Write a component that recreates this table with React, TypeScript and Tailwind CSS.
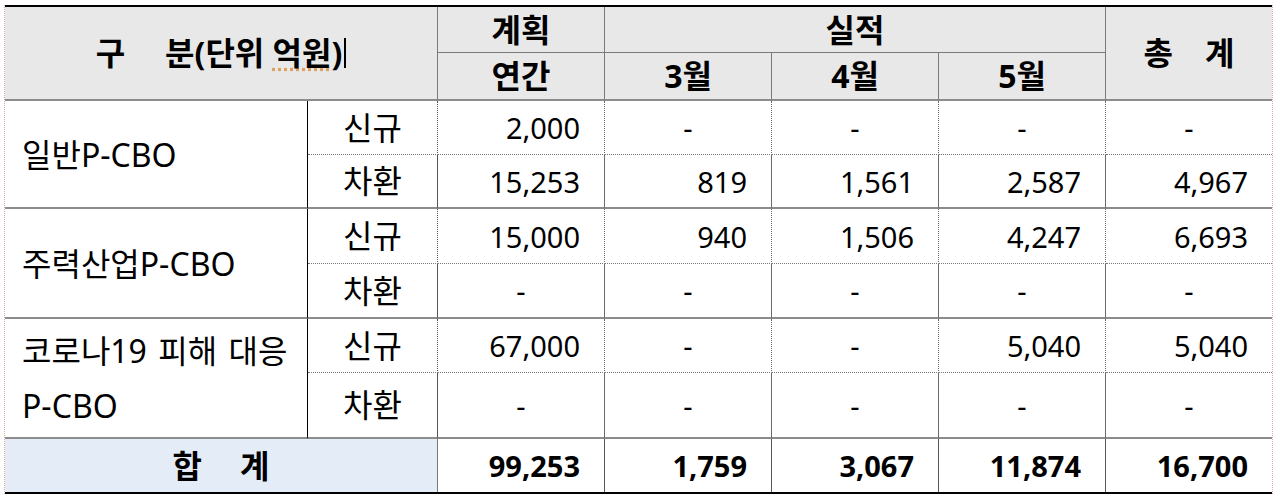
import React from 'react';

type Group = {
  label: React.ReactNode;
  rows: { kind: string; values: string[] }[];
};

const groups: Group[] = [
  {
    label: '일반P-CBO',
    rows: [
      { kind: '신규', values: ['2,000', '-', '-', '-', '-'] },
      { kind: '차환', values: ['15,253', '819', '1,561', '2,587', '4,967'] },
    ],
  },
  {
    label: '주력산업P-CBO',
    rows: [
      { kind: '신규', values: ['15,000', '940', '1,506', '4,247', '6,693'] },
      { kind: '차환', values: ['-', '-', '-', '-', '-'] },
    ],
  },
  {
    label: (
      <>
        <span className="[word-spacing:3px]">코로나19 피해 대응</span>
        <br />
        P-CBO
      </>
    ),
    rows: [
      { kind: '신규', values: ['67,000', '-', '-', '5,040', '5,040'] },
      { kind: '차환', values: ['-', '-', '-', '-', '-'] },
    ],
  },
];

const totals = ['99,253', '1,759', '3,067', '11,874', '16,700'];

const head = 'flex items-center justify-center bg-[#e8e8e8] font-bold text-[32px]';

function Num({ v, last, dotted }: { v: string; last: boolean; dotted?: boolean }) {
  const dash = v === '-';
  return (
    <div
      className={
        'flex items-center ' +
        (dash ? 'justify-center ' : 'justify-end pr-[24px] ') +
        (last ? '' : 'border-r border-[#6a6a6a] ') +
        (dotted ? 'border-b border-dotted border-b-[#777]' : 'border-b-2 border-b-[#8c8c8c]')
      }
    >
      {v}
    </div>
  );
}

export default function App() {
  return (
    <div className="min-h-[498px] bg-white pt-[5px] pl-[4px]">
      <div className="w-[1269px] border-x border-dotted border-x-[#e6a3a3]">
        <div className="grid grid-cols-[303px_130px_167px_167px_167px_167px_166px] grid-rows-[46px_48px_54px_54px_55px_55px_54px_66px_53px] border-y-2 border-black text-[29px] leading-none text-black font-['Noto_Sans','Noto_Sans_CJK_KR',sans-serif]">
          {/* header */}
          <div className={head + ' col-span-2 row-span-2 border-r border-r-[#7a7a7a] border-b-2 border-b-[#8c8c8c]'}>
            <span>구</span>
            <span className="ml-[40px]">
              분(단위 <span className="underline decoration-dotted decoration-[#e0a060] underline-offset-[3px]">억원</span>)
            </span>
            <span className="ml-[2px] inline-block h-[30px] w-[2px] bg-black" />
          </div>
          <div className={head + ' border-r border-r-[#7a7a7a] border-b border-b-[#7a7a7a]'}>계획</div>
          <div className={head + ' col-span-3 border-r border-r-[#7a7a7a] border-b border-b-[#7a7a7a]'}>실적</div>
          <div className={head + ' row-span-2 border-b-2 border-b-[#8c8c8c]'}>
            <span>총</span>
            <span className="ml-[32px]">계</span>
          </div>
          <div className={head + ' border-r border-r-[#7a7a7a] border-b-2 border-b-[#8c8c8c]'}>연간</div>
          <div className={head + ' border-r border-r-[#7a7a7a] border-b-2 border-b-[#8c8c8c]'}>3월</div>
          <div className={head + ' border-r border-r-[#7a7a7a] border-b-2 border-b-[#8c8c8c]'}>4월</div>
          <div className={head + ' border-r border-r-[#7a7a7a] border-b-2 border-b-[#8c8c8c]'}>5월</div>

          {/* body */}
          {groups.map((g, gi) => (
            <React.Fragment key={gi}>
              <div className="row-span-2 flex items-center pl-[17px] text-[32px] leading-[55px] border-r border-r-black border-b-2 border-b-[#8c8c8c]">
                <div>{g.label}</div>
              </div>
              {g.rows.map((r, ri) => (
                <React.Fragment key={ri}>
                  <div
                    className={
                      'flex items-center justify-center text-[32px] border-r border-r-[#555] ' +
                      (ri === 0 ? 'border-b border-dotted border-b-[#777]' : 'border-b-2 border-b-[#8c8c8c]')
                    }
                  >
                    {r.kind}
                  </div>
                  {r.values.map((v, vi) => (
                    <Num key={vi} v={v} last={vi === 4} dotted={ri === 0} />
                  ))}
                </React.Fragment>
              ))}
            </React.Fragment>
          ))}

          {/* total */}
          <div className="col-span-2 flex items-center justify-center bg-[#e4ecf7] text-[32px] font-bold border-r border-r-[#7a7a7a]">
            <span>합</span>
            <span className="ml-[38px]">계</span>
          </div>
          {totals.map((v, i) => (
            <div
              key={i}
              className={
                'flex items-center justify-end pr-[24px] font-bold ' + (i === 4 ? '' : 'border-r border-r-[#555]')
              }
            >
              {v}
            </div>
          ))}
        </div>
      </div>
    </div>
  );
}
